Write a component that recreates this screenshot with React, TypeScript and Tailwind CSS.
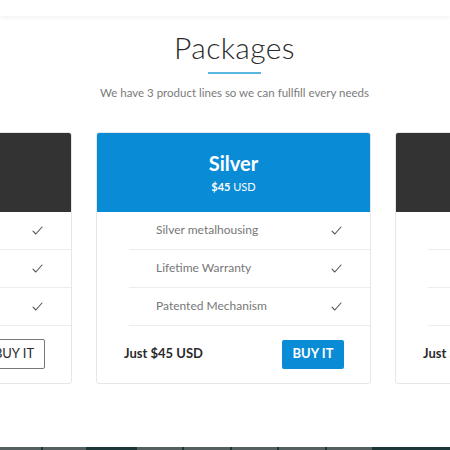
import type { ReactNode } from 'react';

type Plan = {
  name: string;
  price: number;
  features: string[];
  featured?: boolean;
};

const PLANS: Plan[] = [
  { name: 'Bronze', price: 25, features: ['Bronze metalhousing', 'Lifetime Warranty', 'Patented Mechanism'] },
  { name: 'Silver', price: 45, features: ['Silver metalhousing', 'Lifetime Warranty', 'Patented Mechanism'], featured: true },
  { name: 'Gold', price: 65, features: ['Gold metalhousing', 'Lifetime Warranty', 'Patented Mechanism'] },
];

const STRIP: { w: number; dark?: boolean }[] = [
  { w: 41 }, { w: 2, dark: true }, { w: 43 }, { w: 51, dark: true }, { w: 45 }, { w: 2, dark: true },
  { w: 46 }, { w: 2, dark: true }, { w: 45 }, { w: 2, dark: true }, { w: 46 }, { w: 2, dark: true },
  { w: 45 }, { w: 78, dark: true },
];

function Check() {
  return (
    <svg width="11" height="9" viewBox="0 0 11 9" fill="none" aria-hidden>
      <path d="M1 5.2 L3.8 8 L10 1" stroke="#555" strokeWidth="1.1" strokeLinecap="round" strokeLinejoin="round" />
    </svg>
  );
}

function Heading({ children }: { children: ReactNode }) {
  return (
    <div className="flex flex-col items-center">
      <h2 className="text-[30px] font-light leading-none text-[#2a2a2a] [font-family:Lato,sans-serif] tracking-[0.4px]">
        {children}
      </h2>
      <div className="mt-[10px] h-[2px] w-[53px] bg-[#5ab6df]" />
      <p className="mt-[13px] text-[11.5px] leading-none text-[#7a7a7a] [font-family:Lato,sans-serif]">
        We have 3 product lines so we can fullfill every needs
      </p>
    </div>
  );
}

function PlanCard({ plan }: { plan: Plan }) {
  return (
    <div className="flex w-[275px] shrink-0 flex-col overflow-hidden rounded-[3px] border border-[#e6e6e6] bg-white">
      <div
        className={
          plan.featured
            ? 'flex h-[79px] flex-col items-center justify-center bg-[#0a8bd6] text-white'
            : 'flex h-[79px] flex-col items-center justify-center bg-[#333333] text-white'
        }
      >
        <div className="text-[20px] font-bold leading-none [font-family:Lato,sans-serif]">{plan.name}</div>
        <div className="mt-[8px] text-[11px] leading-none [font-family:Lato,sans-serif]">
          <span className="font-bold">${plan.price}</span> USD
        </div>
      </div>
      <ul className="ml-[32px]">
        {plan.features.map((f) => (
          <li
            key={f}
            className="flex h-[38px] items-center justify-between border-b border-[#ededed] pl-[27px] pr-[28px] text-[12px] text-[#777] [font-family:Lato,sans-serif]"
          >
            <span>{f}</span>
            <Check />
          </li>
        ))}
      </ul>
      <div className="flex h-[57px] items-center justify-between pl-[27px] pr-[26px]">
        <span className="text-[13px] font-bold text-[#2b2b2b] [font-family:Lato,sans-serif]">
          Just ${plan.price} USD
        </span>
        <button
          className={
            plan.featured
              ? 'h-[29px] w-[62px] rounded-[2px] bg-[#0a8bd6] text-[13px] font-bold text-white [font-family:Lato,sans-serif]'
              : 'h-[30px] w-[62px] rounded-[2px] border border-[#777] bg-white text-[13px] text-[#2b2b2b] [font-family:Lato,sans-serif]'
          }
        >
          BUY IT
        </button>
      </div>
    </div>
  );
}

export default function App() {
  return (
    <div className="flex h-[450px] w-[450px] flex-col overflow-hidden bg-white">
      <div className="h-[16px] shrink-0 bg-white shadow-[0_2px_4px_rgba(0,0,0,0.05)]" />
      <div className="pl-[19px] pt-[16px]">
        <Heading>Packages</Heading>
      </div>
      <div className="mt-[33px] flex justify-center gap-6 pl-[17px]">
        {PLANS.map((p) => (
          <PlanCard key={p.name} plan={p} />
        ))}
      </div>
      <div className="mt-auto flex h-[3px] shrink-0">
        {STRIP.map((s, i) => (
          <div
            key={i}
            className={s.dark ? 'h-full shrink-0 bg-[#1d3737]' : 'h-full shrink-0 bg-[#53605f]'}
            style={{ width: s.w }}
          />
        ))}
      </div>
    </div>
  );
}
